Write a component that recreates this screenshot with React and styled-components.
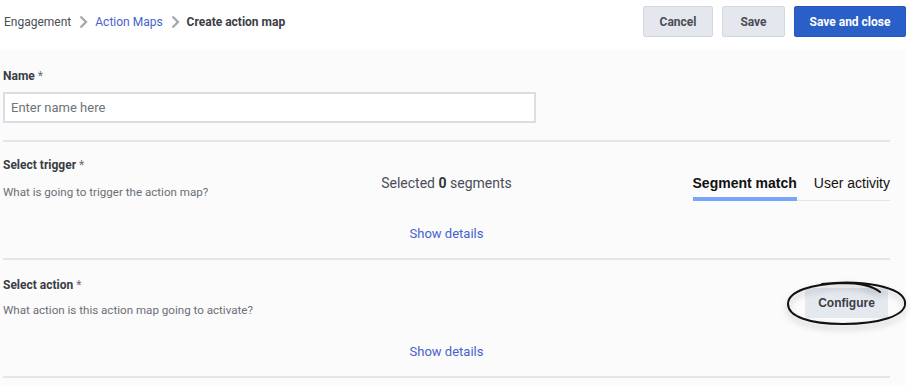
import styled, { createGlobalStyle } from 'styled-components'

const GlobalStyle = createGlobalStyle`
    body {
        margin: 0;
        background: #ffffff;
        font-family: Roboto, "Liberation Sans", Arial, sans-serif;
    }
    * { box-sizing: border-box; }
`

const Chevron = () => (
    <svg width="10" height="14" viewBox="0 0 10 14">
        <path d="M2.5 1.5 L8 7 L2.5 12.5" fill="none" stroke="#a3a6ab" strokeWidth="2.2" />
    </svg>
)

const Scribble = () => (
    <Ellipse width="124" height="50" viewBox="0 0 124 50">
        <path
            d="M36 5 C76 0 117 8 119 23 C121 37 92 45 57 45 C22 45 2 37 2 25 C2 12 26 5 56 4 C76 4 88 8 94 13"
            fill="none"
            stroke="#111"
            strokeWidth="2"
            strokeLinecap="round"
        />
    </Ellipse>
)

export default function App() {
    return (
        <Page>
            <GlobalStyle />
            <Header>
                <Crumbs>
                    <Crumb>Engagement</Crumb>
                    <Chevron />
                    <Crumb $link>Action Maps</Crumb>
                    <Chevron />
                    <Crumb $current>Create action map</Crumb>
                </Crumbs>
                <Actions>
                    <Button $w={70}>Cancel</Button>
                    <Button $w={63}>Save</Button>
                    <Button $w={112} $primary>Save and close</Button>
                </Actions>
            </Header>
            <Body>
                <Section $pt={19} $pb={17}>
                    <Label>Name <Star>*</Star></Label>
                    <Input placeholder="Enter name here" />
                </Section>
                <Section $pt={16} $pb={17}>
                    <Row>
                        <Info>
                            <Label>Select trigger <Star>*</Star></Label>
                            <Desc $gap={13}>What is going to trigger the action map?</Desc>
                        </Info>
                        <Selected>Selected <b>0</b> segments</Selected>
                        <Tabs>
                            <Tab $active>Segment match</Tab>
                            <Tab>User activity</Tab>
                        </Tabs>
                    </Row>
                    <Details $mt={25}>Show details</Details>
                </Section>
                <Section $pt={18} $pb={17}>
                    <Row>
                        <Info>
                            <Label>Select action <Star>*</Star></Label>
                            <Desc $gap={11}>What action is this action map going to activate?</Desc>
                        </Info>
                        <span />
                        <ConfigureWrap>
                            <Configure>Configure</Configure>
                            <Scribble />
                        </ConfigureWrap>
                    </Row>
                    <Details $mt={26}>Show details</Details>
                </Section>
            </Body>
        </Page>
    )
}

const Page = styled.div`
    width: 910px;
    height: 386px;
    overflow: hidden;
    background: #ffffff;
`
const Header = styled.header`
    display: flex;
    align-items: center;
    justify-content: space-between;
    height: 50px;
    padding: 6px 4px 13px 4px;
`
const Crumbs = styled.nav`
    display: flex;
    align-items: center;
    gap: 7px;
    font-size: 12px;
`
const Crumb = styled.span`
    color: ${p => (p.$link ? '#4563cc' : p.$current ? '#3a3d44' : '#4b4e56')};
    font-weight: ${p => (p.$current ? 700 : 400)};
`
const Actions = styled.div`
    display: flex;
    gap: 9px;
`
const Button = styled.button`
    width: ${p => p.$w}px;
    height: 31px;
    border-radius: 2px;
    border: 1px solid ${p => (p.$primary ? '#2458c0' : '#d3d8df')};
    background: ${p => (p.$primary ? '#2b5fc8' : '#e4e8ee')};
    color: ${p => (p.$primary ? '#ffffff' : '#4a4d55')};
    font-family: Roboto, "Liberation Sans", sans-serif;
    font-size: 12px;
    font-weight: 700;
`
const Body = styled.main`
    width: 906px;
    height: 336px;
    background: #fbfbfc;
    padding-left: 3px;
`
const Section = styled.section`
    width: 887px;
    padding: ${p => p.$pt}px 0 ${p => p.$pb}px 0;
    border-bottom: 2px solid #e3e6eb;
`
const Label = styled.div`
    font-size: 12px;
    line-height: 14px;
    font-weight: 700;
    color: #3a3d44;
`
const Star = styled.span`
    color: #6a6d74;
    font-weight: 400;
`
const Input = styled.input`
    display: block;
    margin-top: 9px;
    width: 533px;
    height: 31px;
    border: 2px solid #d9dde4;
    background: #ffffff;
    padding: 0 6px;
    font-family: Roboto, "Liberation Sans", sans-serif;
    font-size: 13px;
    &::placeholder { color: #6f727a; }
`
const Row = styled.div`
    display: grid;
    grid-template-columns: 1fr auto 1fr;
    align-items: start;
`
const Info = styled.div`
    display: flex;
    flex-direction: column;
`
const Desc = styled.div`
    margin-top: ${p => p.$gap}px;
    font-size: 11.6px;
    line-height: 14px;
    color: #6b6e76;
`
const Selected = styled.div`
    margin-top: 17px;
    font-size: 14px;
    color: #4a4d55;
    b { color: #33363c; }
`
const Tabs = styled.div`
    justify-self: end;
    display: flex;
    gap: 17px;
    margin-top: 17px;
    border-bottom: 1px solid #e3e5ea;
    font-family: "Liberation Sans", Arial, sans-serif;
`
const Tab = styled.div`
    font-size: 14px;
    line-height: 16px;
    padding-bottom: 6px;
    margin-bottom: -1px;
    color: #111;
    font-weight: ${p => (p.$active ? 700 : 400)};
    border-bottom: 4px solid ${p => (p.$active ? '#78a6f8' : 'transparent')};
`
const Details = styled.div`
    margin-top: ${p => p.$mt}px;
    text-align: center;
    font-size: 13px;
    line-height: 15px;
    color: #4563cc;
`
const ConfigureWrap = styled.div`
    position: relative;
    justify-self: end;
    margin-top: 10px;
    margin-right: 2px;
`
const Configure = styled.button`
    width: 83px;
    height: 30px;
    border: none;
    border-radius: 2px;
    background: #e4e8ef;
    color: #3a3d44;
    font-family: "Liberation Sans", Arial, sans-serif;
    font-size: 12px;
    font-weight: 700;
`
const Ellipse = styled.svg`
    position: absolute;
    left: -19px;
    top: -9px;
    pointer-events: none;
    filter: drop-shadow(0 4px 3px rgba(0, 0, 0, 0.25));
`
